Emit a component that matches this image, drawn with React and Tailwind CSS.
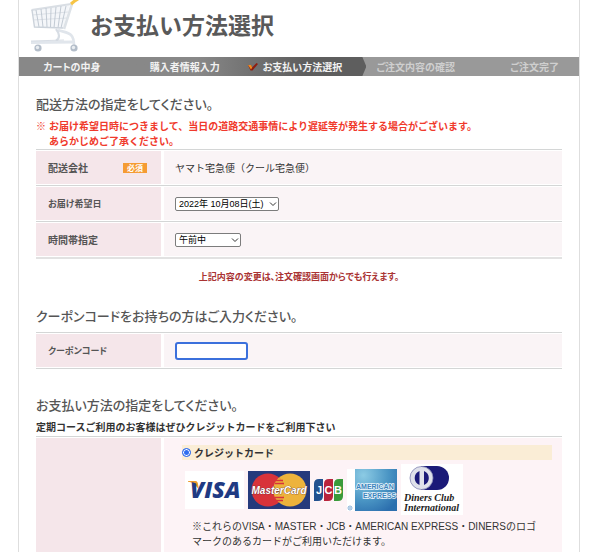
import React from 'react';

const CartIcon = () => (
  <svg className="h-[52px] w-[50px] shrink-0" viewBox="0 0 50 52" fill="none" aria-hidden="true">
    <path d="M1.500 10 L40 4 L33 28 L5 27 Z" fill="#f4f6f9" />
    <path d="M1.500 10 L41 4" stroke="#d9dee4" strokeWidth="1.800" />
    <path d="M2 15 L38 12 M3 20 L37 18" stroke="#d3d9e0" strokeWidth="0.700" />
    <path d="M6 10 L9 27 M11 9 L13 27 M16 8 L17 27 M21 8 L20.500 28 M26 7 L24 28 M31 6 L28 28 M36 6 L31 28" stroke="#bcc5cf" strokeWidth="0.900" />
    <path d="M2 10 L4.500 27 L33 28" stroke="#ccd3db" strokeWidth="1.400" />
    <path d="M42 4 L34 29" stroke="#dde2e7" strokeWidth="2.600" />
    <path d="M28 30 C33 32 38 32 41 35 C44 38 44 42 44 46" stroke="#e0e5eb" strokeWidth="2.600" />
    <path d="M26 29 C30 34 30 38 26 41" stroke="#d7dde4" strokeWidth="2.200" />
    <path d="M1 42.500 L44 42" stroke="#e1e6ec" strokeWidth="3" />
    <path d="M1 41 L34 40" stroke="#cfd6de" strokeWidth="0.800" />
    <path d="M41 4 L44 1.500 L48 -1" stroke="#f6c445" strokeWidth="3" />
    <circle cx="8" cy="48" r="3.600" fill="#b3bdc9" />
    <circle cx="7.500" cy="47.500" r="1.700" fill="#e9edf1" />
    <circle cx="44" cy="48" r="3.600" fill="#b3bdc9" />
    <circle cx="43.500" cy="47.500" r="1.700" fill="#e9edf1" />
  </svg>
);

const CheckMark = () => (
  <svg className="h-2.5 w-3 shrink-0" viewBox="0 0 12 10" aria-hidden="true">
    <path d="M1 3 L4 3 L5 5.500 L9.500 1 L11 2 L5.500 8.500 L3.500 8.500 Z" fill="#8d1d10" />
    <path d="M1 3 L4 3 L5.200 5.500 L4 7.500 Z" fill="#f08a1c" />
  </svg>
);

const Visa = () => (
  <svg className="h-[38px] w-[59px]" viewBox="0 0 59 38" role="img" aria-label="VISA">
    <rect width="59" height="38" fill="#fff" />
    <path d="M3 10 L10 10 Q12.500 10 13 13 L14 19 Q10 12 3 10.500 Z" fill="#ee9b2d" />
    <text x="5" y="27" fontFamily="Open Sans" fontSize="23" fontWeight="800" fontStyle="italic" fill="#1f3a83">VISA</text>
    <path d="M3 10 L10 10 Q12 10 12.500 13 Q9 11 3 10.500 Z" fill="#ee9b2d" />
  </svg>
);

const MasterCard = () => (
  <svg className="h-[38px] w-[62px]" viewBox="0 0 62 38" role="img" aria-label="MasterCard">
    <rect width="62" height="38" fill="#253a7c" />
    <circle cx="42" cy="19" r="16.500" fill="#edb33c" />
    <circle cx="20" cy="19" r="16.500" fill="#d8333a" />
    <path d="M31 6.500 A16.500 16.500 0 0 1 31 31.500 A16.500 16.500 0 0 1 31 6.500 Z" fill="#edb33c" />
    <path d="M28 9.500 H35 M27 12.500 H36 M27 26.500 H36 M28 29.500 H35" stroke="#d8333a" strokeWidth="1.400" />
    <text x="31" y="23" textAnchor="middle" fontFamily="Liberation Sans" fontSize="10" fontWeight="700" fontStyle="italic" fill="#fff" stroke="#5c2b35" strokeWidth="0.600" paintOrder="stroke">MasterCard</text>
  </svg>
);

const Jcb = () => (
  <svg className="h-[22px] w-[29px]" viewBox="0 0 29 22" role="img" aria-label="JCB">
    <path d="M0 5 Q0 0 5 0 H9 V17 Q9 22 4 22 H0 Z" fill="#22518f" />
    <path d="M10 5 Q10 0 15 0 H19 V17 Q19 22 14 22 H10 Z" fill="#b9243c" />
    <path d="M20 5 Q20 0 25 0 H29 V17 Q29 22 24 22 H20 Z" fill="#3a9a3a" />
    <g fontFamily="Liberation Sans" fontSize="11" fontWeight="700" fill="#fff" textAnchor="middle">
      <text x="5" y="15">J</text>
      <text x="14.500" y="15">C</text>
      <text x="24" y="15">B</text>
    </g>
  </svg>
);

const Amex = () => (
  <svg className="h-[42px] w-[50px]" viewBox="0 0 50 42" role="img" aria-label="AMERICAN EXPRESS">
    <defs>
      <radialGradient id="amex" cx="0.2" cy="0.15" r="1">
        <stop offset="0" stopColor="#8ccbe4" />
        <stop offset="0.6" stopColor="#4a95c4" />
        <stop offset="1" stopColor="#2c6fae" />
      </radialGradient>
    </defs>
    <rect width="50" height="42" fill="#fff" />
    <rect x="8" width="42" height="42" fill="url(#amex)" />
    <g fontFamily="Liberation Sans" fontSize="7" fontWeight="700" fill="#3b85bd" stroke="#e8f4fa" strokeWidth="1.600" paintOrder="stroke">
      <text x="9" y="20">AMERICAN</text>
      <text x="49" y="29" textAnchor="end">EXPRESS</text>
    </g>
    <circle cx="3" cy="39" r="2" fill="none" stroke="#5b94c8" strokeWidth="0.700" />
    <circle cx="3" cy="39" r="0.800" fill="#5b94c8" />
  </svg>
);

const Diners = () => (
  <svg className="h-[51px] w-[62px]" viewBox="0 0 62 51" role="img" aria-label="Diners Club International">
    <rect width="62" height="51" fill="#fff" />
    <path d="M20 2 H36 A11.500 11.500 0 0 1 36 26 H20 Z" fill="#1b1a78" />
    <circle cx="20.500" cy="14" r="11.500" fill="#dfe1ea" stroke="#8587b4" strokeWidth="0.800" />
    <path d="M18.500 7 A7.500 7.500 0 0 0 18.500 21 Z M23 7 A7.500 7.500 0 0 1 23 21 Z" fill="#1b1a78" />
    <g fontFamily="Liberation Serif" fontSize="10" fontStyle="italic" fontWeight="700" fill="#1c1c1c">
      <text x="3" y="37">Diners Club</text>
      <text x="3" y="47">International</text>
    </g>
  </svg>
);

const Chevron = () => (
  <svg className="pointer-events-none absolute top-1 right-0.5 h-1.5 w-2" viewBox="0 0 8 6" fill="none" aria-hidden="true">
    <path d="M1 1.500 L4 4.500 L7 1.500" stroke="#333" strokeWidth="1" />
  </svg>
);

const Select = ({ id, options, className }) => (
  <div className="relative inline-block">
    <select id={id} className={`block h-3.5 appearance-none rounded-xs border border-[#7c7c7c] bg-white pl-[3px] font-['Liberation_Sans','Noto_Sans_CJK_JP',sans-serif] text-[9px] leading-3 text-black ${className}`}>
      {options.map((option) => <option key={option}>{option}</option>)}
    </select>
    <Chevron />
  </div>
);

const Heading = ({ children }) => (
  <h2 className="text-[13px] leading-5 font-medium text-[#555] [font-feature-settings:'palt']">{children}</h2>
);

const Row = ({ label, htmlFor, required, labelClass = 'text-[10px]', children }) => (
  <div className="flex min-h-9 gap-[3px] border-t border-[#d4d6d6] py-px">
    <div className="flex w-[125px] shrink-0 items-center justify-between bg-[#f5e6ea] pr-3.5 pl-3 font-bold text-[#555] [font-feature-settings:'palt']">
      <label htmlFor={htmlFor} className={labelClass}>{label}</label>
      {required && <span className="h-2.5 w-6 bg-[#f59b33] text-center text-[8px] leading-2.5 text-white">必須</span>}
    </div>
    <div className="flex flex-1 items-center bg-[#faf4f6] pl-[11px] text-[10px]">{children}</div>
  </div>
);

const Steps = () => (
  <ol className="grid h-[19px] grid-cols-[106fr_120fr_122fr_110fr_103fr] bg-[#999] text-[10px] leading-[19px] font-bold whitespace-nowrap text-[#f2f2f2] [font-feature-settings:'palt']">
    <li className="bg-[#888] text-center">カートの中身</li>
    <li className="bg-linear-to-r from-[#888] from-60% to-[#747474] text-center">購入者情報入力</li>
    <li className="flex items-center gap-1 bg-linear-to-r from-[#747474] to-[#5e5e5e] to-50% pl-0.5 [clip-path:polygon(0_0,calc(100%_-_4px)_0,100%_50%,calc(100%_-_4px)_100%,0_100%)]" aria-current="step">
      <CheckMark />
      お支払い方法選択
    </li>
    <li className="pl-2.5 text-[#cfcfcf]">ご注文内容の確認</li>
    <li className="pr-5 text-right text-[#cfcfcf]">ご注文完了</li>
  </ol>
);

const App = () => (
  <div className="min-h-screen bg-white pr-5 pl-[18px] font-['Noto_Sans_CJK_JP',sans-serif] text-[#333]">
    <main className="flex min-h-screen flex-col border-x border-[#dedede]">
      <header className="flex h-[57px] items-start gap-2.5 pl-[11px]">
        <CartIcon />
        <h1 className="mt-1.5 text-[23px] leading-9 font-bold text-[#595959]">お支払い方法選択</h1>
      </header>
      <Steps />

      <form className="flex grow flex-col px-[17px]" onSubmit={(e) => e.preventDefault()}>
        <section className="pt-[18px]">
          <Heading>配送方法の指定をしてください。</Heading>
          <p className="mt-1 mb-px flex gap-[3px] text-[10px] leading-[15px] font-bold text-[#f03a2c]">
            <span>※</span>
            <span>お届け希望日時につきまして、当日の道路交通事情により遅延等が発生する場合がございます。<br />あらかじめご了承ください。</span>
          </p>
          <div className="border-b-2 border-[#e2e2e2]">
            <Row label="配送会社" required>ヤマト宅急便（クール宅急便）</Row>
            <Row label="お届け希望日" htmlFor="date" labelClass="text-[9px]">
              <Select id="date" options={['2022年 10月08日(土)']} className="w-[104px]" />
            </Row>
            <Row label="時間帯指定" htmlFor="time">
              <Select id="time" options={['午前中']} className="w-[66px]" />
            </Row>
          </div>
          <p className="mt-2.5 text-center text-[9px] leading-4 font-bold text-[#a33] [font-feature-settings:'palt']">上記内容の変更は、注文確認画面からでも行えます。</p>
        </section>

        <section className="pt-[21px]">
          <Heading>クーポンコードをお持ちの方はご入力ください。</Heading>
          <div className="mt-1.5 border-b border-[#d4d6d6]">
            <Row label="クーポンコード" htmlFor="coupon" labelClass="text-[9px]">
              <input id="coupon" type="text" className="h-[18px] w-[73px] rounded-[3px] border-2 border-[#3b70dc] bg-white px-1 outline-none" />
            </Row>
          </div>
        </section>

        <section className="flex grow flex-col pt-[26px]">
          <Heading>お支払い方法の指定をしてください。</Heading>
          <p className="mt-1 text-[10px] leading-[15px] font-bold">定期コースご利用のお客様はぜひクレジットカードをご利用下さい</p>
          <div className="mt-0.5 flex grow gap-[3px] border-t border-[#d4d6d6] pt-px">
            <div className="w-[125px] shrink-0 bg-[#f5e6ea]" />
            <div className="flex-1 bg-[#fdf3f6] pt-[7px] pr-2.5 pl-[18px]">
              <label className="flex h-[15px] items-center gap-[3px] bg-[#faedd6] text-[10px] font-bold">
                <input type="radio" name="payment" defaultChecked className="size-[9px] appearance-none rounded-full border border-[#2f6df0] bg-white checked:bg-[#2f6df0] checked:shadow-[inset_0_0_0_1px_white]" />
                クレジットカード
              </label>
              <div className="mt-1 flex items-center gap-1 pl-[3px]">
                <Visa />
                <MasterCard />
                <Jcb />
                <Amex />
                <Diners />
              </div>
              <p className="mt-1 pl-2.5 font-['Liberation_Sans','Noto_Sans_CJK_JP',sans-serif] text-[10px] leading-[15px]">
                ※これらのVISA・MASTER・JCB・AMERICAN EXPRESS・DINERSのロゴ<br />マークのあるカードがご利用いただけます。
              </p>
            </div>
          </div>
        </section>
      </form>
    </main>
  </div>
);

export default App;
